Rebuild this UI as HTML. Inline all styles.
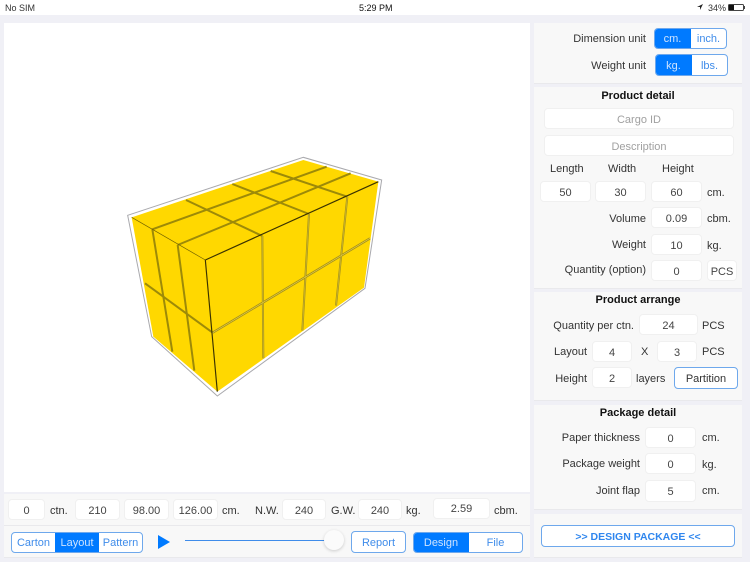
<!DOCTYPE html>
<html><head><meta charset="utf-8">
<style>
html,body{margin:0;padding:0;width:750px;height:562px;overflow:hidden;background:#f0f0f6;}
body{font-family:"Liberation Sans",sans-serif;font-size:11px;color:#333;}
#w{position:absolute;left:0;top:0;width:750px;height:562px;overflow:hidden;filter:blur(.3px);}
.a,.i,.t,.b,.p{position:absolute;box-sizing:border-box;}
.p{background:#f8f8f8;box-shadow:0 1px 0 #e9e9ec;}
.i{background:#fff;border:1px solid #f0f0f0;border-radius:4px;text-align:center;color:#444;display:flex;align-items:center;justify-content:center;font-size:11px;padding-top:2px;}
.t{white-space:nowrap;line-height:14px;margin-top:1px;}
.r{text-align:right;}
.h{font-weight:bold;color:#111;text-align:center;}
.b{border:1px solid #6ea8ec;border-radius:4px;color:#3f8cea;display:flex;align-items:center;justify-content:center;overflow:hidden;background:#fff;}
.b span{flex:none;height:100%;display:flex;align-items:center;justify-content:center;padding-top:1px;box-sizing:border-box;}
.on{background:#007aff;color:#cfe4ff;}
</style></head><body><div id="w">
<div class="a" style="left:0;top:0;width:750px;height:15px;background:#fff"></div>
<div class="t" style="left:5px;top:1px;margin-top:0;font-size:9px">No SIM</div>
<div class="t" style="left:359px;top:1px;margin-top:0;font-size:9px;color:#111">5:29 PM</div>
<svg class="a" style="left:696px;top:3px" width="8" height="8" viewBox="0 0 8 8"><path d="M7 1L1 4H4V7Z" fill="#222"/></svg>
<div class="t" style="left:708px;top:1px;margin-top:0;font-size:9px">34%</div>
<div class="a" style="left:728px;top:4px;width:16px;height:7px;border:1px solid #444;border-radius:1.5px"><div style="width:5px;height:5px;background:#111"></div></div>
<div class="a" style="left:744px;top:6px;width:1px;height:3px;background:#444"></div>

<div class="a" style="left:4px;top:23px;width:526px;height:469px;background:#fff"></div>
<svg class="a" style="left:0;top:0" width="750" height="562">
<g transform="translate(100 140) scale(.33333)" fill="none">
<path d="M83 226L610 52L845 120L795 445L352 768L155 590Z" stroke="#a9a9ad" stroke-width="3"/>
<path d="M95 232L610 60L835 125L792 443L352 755L160 590Z" fill="#ffd800"/>
<g stroke="#9d8a08" stroke-width="6">
<path d="M157 268L680 80M233 315L752 100M258 180L487 288M397 132L627 222M512 93L742 170"/>
<path d="M157 268L217 635M233 315L283 692"/>
<path d="M135 430L338 578"/>
</g>
<g stroke="#a8941a" stroke-width="6">
<path d="M487 288L490 655M627 222L607 572M742 170L708 497"/>
<path d="M338 578L810 295" stroke-width="7"/>
</g>
<path d="M338 578L810 295" stroke="#ffe75a" stroke-width="1.5"/>
<path d="M487 288L490 655M627 222L607 572M742 170L708 497" stroke="#e8d040" stroke-width="1.2"/>
<path d="M316 360L835 125M316 360L352 755" stroke="#3a3200" stroke-width="3.5"/>
<path d="M316 360L95 232" stroke="#6f6000" stroke-width="2"/>
</g>
</svg>

<div class="p" style="left:4px;top:494px;width:526px;height:31px"></div>
<div class="p" style="left:4px;top:526px;width:526px;height:31px"></div>

<div class="i" style="left:8px;top:499px;width:37px;height:21px">0</div>
<div class="t" style="left:50px;top:503px">ctn.</div>
<div class="i" style="left:75px;top:499px;width:45px;height:21px">210</div>
<div class="i" style="left:124px;top:499px;width:45px;height:21px">98.00</div>
<div class="i" style="left:173px;top:499px;width:45px;height:21px">126.00</div>
<div class="t" style="left:222px;top:503px">cm.</div>
<div class="t" style="left:255px;top:503px">N.W.</div>
<div class="i" style="left:282px;top:499px;width:44px;height:21px">240</div>
<div class="t" style="left:331px;top:503px">G.W.</div>
<div class="i" style="left:358px;top:499px;width:44px;height:21px">240</div>
<div class="t" style="left:406px;top:503px">kg.</div>
<div class="i" style="left:433px;top:498px;width:57px;height:21px;padding-top:1px">2.59</div>
<div class="t" style="left:494px;top:503px">cbm.</div>

<div class="b" style="left:11px;top:532px;width:132px;height:21px"><span style="width:43px">Carton</span><span class="on" style="width:44px">Layout</span><span style="width:43px">Pattern</span></div>
<svg class="a" style="left:158px;top:535px" width="12" height="14"><path d="M0 0L12 7L0 14Z" fill="#007aff"/></svg>
<div class="a" style="left:185px;top:540px;width:140px;height:1px;background:#3f8cea"></div>
<div class="a" style="left:324px;top:530px;width:20px;height:20px;border-radius:50%;background:#fbfbfb;box-shadow:0 1px 3px rgba(0,0,0,.18)"></div>
<div class="b" style="left:351px;top:531px;width:55px;height:22px;padding-top:1px">Report</div>
<div class="b" style="left:413px;top:532px;width:110px;height:21px"><span class="on" style="width:55px">Design</span><span style="width:54px">File</span></div>

<div class="p" style="left:534px;top:23px;width:208px;height:60px"></div>
<div class="t r" style="left:540px;top:31px;width:106px">Dimension unit</div>
<div class="b" style="left:654px;top:28px;width:73px;height:21px"><span class="on" style="width:36px">cm.</span><span style="width:36px">inch.</span></div>
<div class="t r" style="left:540px;top:58px;width:106px">Weight unit</div>
<div class="b" style="left:655px;top:54px;width:73px;height:22px"><span class="on" style="width:36px">kg.</span><span style="width:36px">lbs.</span></div>

<div class="p" style="left:534px;top:87px;width:208px;height:201px"></div>
<div class="t h" style="left:534px;top:88px;width:208px">Product detail</div>
<div class="i" style="left:544px;top:108px;width:190px;height:21px;color:#a0a0a0">Cargo ID</div>
<div class="i" style="left:544px;top:135px;width:190px;height:21px;color:#a0a0a0">Description</div>
<div class="t" style="left:550px;top:161px">Length</div>
<div class="t" style="left:608px;top:161px">Width</div>
<div class="t" style="left:662px;top:161px">Height</div>
<div class="i" style="left:540px;top:181px;width:51px;height:21px">50</div>
<div class="i" style="left:595px;top:181px;width:51px;height:21px">30</div>
<div class="i" style="left:651px;top:181px;width:51px;height:21px">60</div>
<div class="t" style="left:707px;top:185px">cm.</div>
<div class="t r" style="left:540px;top:211px;width:106px">Volume</div>
<div class="i" style="left:651px;top:207px;width:51px;height:21px">0.09</div>
<div class="t" style="left:707px;top:211px">cbm.</div>
<div class="t r" style="left:540px;top:237px;width:106px">Weight</div>
<div class="i" style="left:651px;top:234px;width:51px;height:21px">10</div>
<div class="t" style="left:707px;top:238px">kg.</div>
<div class="t r" style="left:540px;top:262px;width:106px">Quantity (option)</div>
<div class="i" style="left:651px;top:260px;width:51px;height:21px">0</div>
<div class="i" style="left:707px;top:260px;width:30px;height:21px">PCS</div>

<div class="p" style="left:534px;top:292px;width:208px;height:108px"></div>
<div class="t h" style="left:534px;top:292px;width:208px">Product arrange</div>
<div class="t r" style="left:540px;top:318px;width:94px">Quantity per ctn.</div>
<div class="i" style="left:639px;top:314px;width:59px;height:21px">24</div>
<div class="t" style="left:702px;top:318px">PCS</div>
<div class="t r" style="left:540px;top:344px;width:47px">Layout</div>
<div class="i" style="left:592px;top:341px;width:40px;height:21px">4</div>
<div class="t" style="left:641px;top:344px">X</div>
<div class="i" style="left:657px;top:341px;width:40px;height:21px">3</div>
<div class="t" style="left:702px;top:344px">PCS</div>
<div class="t r" style="left:540px;top:371px;width:47px">Height</div>
<div class="i" style="left:592px;top:367px;width:40px;height:21px">2</div>
<div class="t" style="left:636px;top:371px">layers</div>
<div class="b" style="left:674px;top:367px;width:64px;height:22px;color:#333;padding-top:1px">Partition</div>

<div class="p" style="left:534px;top:405px;width:208px;height:104px"></div>
<div class="t h" style="left:534px;top:405px;width:208px">Package detail</div>
<div class="t r" style="left:540px;top:430px;width:100px">Paper thickness</div>
<div class="i" style="left:645px;top:427px;width:51px;height:21px">0</div>
<div class="t" style="left:702px;top:430px">cm.</div>
<div class="t r" style="left:540px;top:456px;width:100px">Package weight</div>
<div class="i" style="left:645px;top:453px;width:51px;height:21px">0</div>
<div class="t" style="left:702px;top:457px">kg.</div>
<div class="t r" style="left:540px;top:483px;width:100px">Joint flap</div>
<div class="i" style="left:645px;top:480px;width:51px;height:22px">5</div>
<div class="t" style="left:702px;top:483px">cm.</div>

<div class="p" style="left:534px;top:514px;width:208px;height:43px"></div>
<div class="b" style="left:541px;top:525px;width:194px;height:22px;font-weight:bold;font-size:10.5px;color:#2f86ee;padding-top:1px">&gt;&gt; DESIGN PACKAGE &lt;&lt;</div>
</div></body></html>
